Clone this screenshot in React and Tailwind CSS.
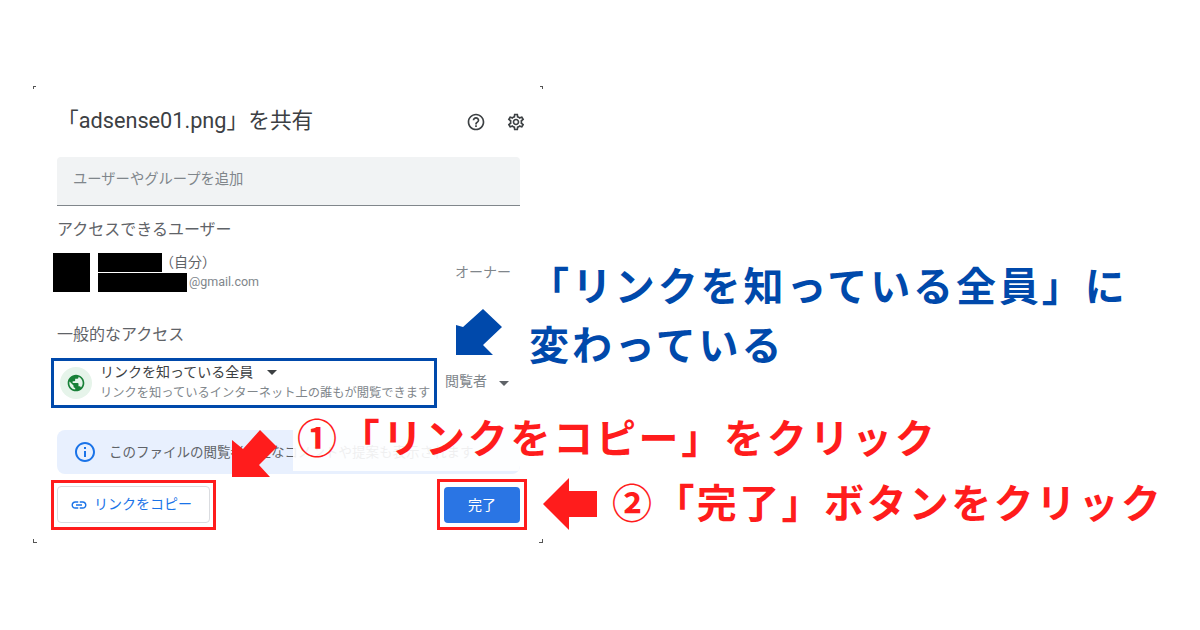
import React from 'react';

const icons = {
  help: 'M11 18h2v-2h-2v2zm1-16C6.48 2 2 6.48 2 12s4.48 10 10 10 10-4.48 10-10S17.52 2 12 2zm0 18c-4.41 0-8-3.59-8-8s3.59-8 8-8 8 3.59 8 8-3.59 8-8 8zm0-14c-2.21 0-4 1.79-4 4h2c0-1.1.9-2 2-2s2 .9 2 2c0 2-3 1.75-3 5h2c0-2.25 3-2.5 3-5 0-2.21-1.79-4-4-4z',
  gear: 'M19.43 12.98c.04-.32.07-.64.07-.98 0-.34-.03-.66-.07-.98l2.11-1.65c.19-.15.24-.42.12-.64l-2-3.46c-.09-.16-.26-.25-.44-.25-.06 0-.12.01-.17.03l-2.49 1c-.52-.4-1.08-.73-1.69-.98l-.38-2.65C14.46 2.18 14.25 2 14 2h-4c-.25 0-.46.18-.49.42l-.38 2.65c-.61.25-1.17.59-1.69.98l-2.49-1c-.06-.02-.12-.03-.18-.03-.17 0-.34.09-.43.25l-2 3.46c-.13.22-.07.49.12.64l2.11 1.65c-.04.32-.07.65-.07.98 0 .33.03.66.07.98l-2.11 1.65c-.19.15-.24.42-.12.64l2 3.46c.09.16.26.25.44.25.06 0 .12-.01.17-.03l2.49-1c.52.4 1.08.73 1.69.98l.38 2.65c.03.24.24.42.49.42h4c.25 0 .46-.18.49-.42l.38-2.65c.61-.25 1.17-.59 1.69-.98l2.49 1c.06.02.12.03.18.03.17 0 .34-.09.43-.25l2-3.46c.12-.22.07-.49-.12-.64l-2.11-1.65zm-1.98-1.71c.04.31.05.52.05.73 0 .21-.02.43-.05.73l-.14 1.13.89.7 1.08.84-.7 1.21-1.27-.51-1.04-.42-.9.68c-.43.32-.84.56-1.25.73l-1.06.43-.16 1.13-.2 1.35h-1.4l-.19-1.35-.16-1.13-1.06-.43c-.43-.18-.83-.41-1.23-.71l-.91-.7-1.06.43-1.27.51-.7-1.21 1.08-.84.89-.7-.14-1.13c-.03-.31-.05-.54-.05-.74s.02-.43.05-.73l.14-1.13-.89-.7-1.08-.84.7-1.21 1.27.51 1.04.42.9-.68c.43-.32.84-.56 1.25-.73l1.06-.43.16-1.13.2-1.35h1.39l.19 1.35.16 1.13 1.06.43c.43.18.83.41 1.23.71l.91.7 1.06-.43 1.27-.51.7 1.21-1.07.85-.89.7.14 1.13zM12 8c-2.21 0-4 1.79-4 4s1.79 4 4 4 4-1.79 4-4-1.79-4-4-4zm0 6c-1.1 0-2-.9-2-2s.9-2 2-2 2 .9 2 2-.9 2-2 2z',
  link: 'M3.9 12c0-1.71 1.39-3.1 3.1-3.1h4V7H7c-2.76 0-5 2.24-5 5s2.24 5 5 5h4v-1.9H7c-1.71 0-3.1-1.39-3.1-3.1zM8 13h8v-2H8v2zm9-6h-4v1.9h4c1.71 0 3.1 1.39 3.1 3.1s-1.39 3.1-3.1 3.1h-4V17h4c2.76 0 5-2.24 5-5s-2.24-5-5-5z',
  globe: 'M12 2C6.48 2 2 6.48 2 12s4.48 10 10 10 10-4.48 10-10S17.52 2 12 2zm-1 17.93c-3.95-.49-7-3.85-7-7.93 0-.62.08-1.21.21-1.79L9 15v1c0 1.1.9 2 2 2v1.93zm6.9-2.54c-.26-.81-1-1.39-1.9-1.39h-1v-3c0-.55-.45-1-1-1H8v-2h2c.55 0 1-.45 1-1V7h2c1.1 0 2-.9 2-2v-.41c2.93 1.19 5 4.06 5 7.41 0 2.08-.8 3.97-2.1 5.39z',
  info: 'M11 7h2v2h-2zm0 4h2v6h-2zm1-9C6.48 2 2 6.48 2 12s4.48 10 10 10 10-4.48 10-10S17.52 2 12 2zm0 18c-4.41 0-8-3.59-8-8s3.59-8 8-8 8 3.59 8 8-3.59 8-8 8z',
};

const Icon = ({ name, className }) => (
  <svg viewBox="0 0 24 24" fill="currentColor" className={className}>
    <path d={icons[name]} />
  </svg>
);

const Caret = ({ className = '' }) => (
  <span className={`w-0 h-0 border-x-[5px] border-x-transparent border-t-[5px] ${className}`} />
);

// the little dark marks left at the corners of the cropped dialog
const CornerMarks = () => (
  <>
    <span className="absolute left-0 top-0 w-[3px] h-[3px] border-l border-t border-[#555]" />
    <span className="absolute right-0 top-0 w-[3px] h-[3px] border-r border-t border-[#555]" />
    <span className="absolute left-0 bottom-0 w-[4px] h-[4px] border-l border-b border-[#555]" />
    <span className="absolute right-0 bottom-0 w-[4px] h-[4px] border-r border-b border-[#555]" />
  </>
);

const Dialog = () => (
  <div className="relative w-[510px] h-[457px] pl-[24px] pr-[23px] bg-white font-['Roboto','Noto_Sans_CJK_JP',sans-serif]">
    <CornerMarks />

    <div className="flex items-center justify-between h-[71px] -mr-[6px]">
      <h1 className="text-[21.7px] font-normal text-[#3c4043]">「adsense01.png」を共有</h1>
      <div className="flex items-center gap-[20px] text-[#3c4043]">
        <Icon name="help" className="w-[20px] h-[20px]" />
        <Icon name="gear" className="w-[20px] h-[20px]" />
      </div>
    </div>

    <div className="flex items-center h-[49px] px-[16px] pb-[3px] bg-[#f1f3f4] rounded-t border-b border-[#80868b] text-[14.3px] text-[#80868b]">
      ユーザーやグループを追加
    </div>

    <div className="flex items-center h-[47px] text-[16px] text-[#5f6368]">アクセスできるユーザー</div>

    <div className="flex items-center -ml-[4px]">
      <div className="w-[37px] h-[39px] bg-black" />
      <div className="ml-[8px] flex flex-col gap-px">
        <div className="flex items-center h-[19px] text-[14px] text-[#5f6368]">
          <span className="w-[64px] h-[19px] -mr-[2px] bg-black" />
          （自分）
        </div>
        <div className="flex items-center h-[19px] text-[12.5px] text-[#80868b]">
          <span className="w-[89px] h-[19px] mr-[2px] bg-black" />
          @gmail.com
        </div>
      </div>
      <span className="ml-auto mr-[9px] text-[14px] text-[#80868b]">オーナー</span>
    </div>

    <div className="pt-[33px] pb-[13px] text-[16px] leading-[20px] text-[#5f6368]">一般的なアクセス</div>

    <div className="flex items-center -ml-[6px]">
      <div className="flex items-center w-[386px] h-[50px] border-[3px] border-[#0049ab] pl-[6px]">
        <div className="flex items-center justify-center w-[32px] h-[32px] rounded-full bg-[#e6f4ea]">
          <Icon name="globe" className="w-[20px] h-[20px] text-[#188038]" />
        </div>
        <div className="ml-[8px] flex flex-col">
          <div className="flex items-center h-[21px] text-[14px] text-[#3c4043]">
            リンクを知っている全員
            <Caret className="ml-[14px] border-t-[#3c4043]" />
          </div>
          <div className="h-[21px] text-[12.25px] leading-[21px] whitespace-nowrap text-[#80868b]">
            リンクを知っているインターネット上の誰もが閲覧できます
          </div>
        </div>
      </div>
      <span className="ml-[8px] pb-[4px] text-[14px] text-[#80868b]">閲覧者</span>
      <Caret className="ml-[12px] border-t-[#5f6368]" />
    </div>

    <div className="relative flex items-center h-[44px] mt-[22px] pl-[16px] rounded-lg bg-[#e8f0fe] overflow-hidden">
      <Icon name="info" className="w-[24px] h-[24px] text-[#1a73e8]" />
      <span className="ml-[12px] text-[13.5px] whitespace-nowrap text-[#5f6368]">
        このファイルの閲覧者に主なコメントや提案も表示されます
      </span>
      <div className="absolute left-[236px] right-0 top-0 h-[41px] bg-white/90" />
    </div>

    <div className="flex items-start justify-between mt-[5px] -ml-[6px] -mr-[7px]">
      <div className="mt-px border-[3px] border-[#ff1c1c] px-[3px] pt-[3px] pb-[4px]">
        <button className="flex items-center w-[153px] h-[37px] pl-[12px] gap-[6px] bg-white border border-[#dadce0] rounded text-[14px] text-[#1a73e8]">
          <Icon name="link" className="w-[18px] h-[18px]" />
          リンクをコピー
        </button>
      </div>
      <div className="border-[3px] border-[#ff1c1c] px-[4px] pt-[5px] pb-[4px]">
        <button className="w-[76px] h-[36px] rounded bg-[#2a75e4] text-[14px] text-white">完了</button>
      </div>
    </div>
  </div>
);

// annotations pasted on top of the screenshot
const Annotations = () => (
  <div className="font-['Noto_Sans_CJK_JP',sans-serif] font-bold text-[40px] leading-[60px] whitespace-nowrap">
    <svg className="absolute left-0 top-0 w-[1200px] h-[630px] pointer-events-none" viewBox="0 0 1200 630">
      <polygon fill="#0049ab" points="456,355 456,325 463,327 483,309 502,327 483,345 493,355" />
      <polygon fill="#ff1c1c" points="232,477 232,440 243,449 260,430 277,447 259,465 270,477" />
      <polygon fill="#ff1c1c" points="543,504 569,478 569,491 597,491 597,517 569,517 569,530" />
    </svg>
    <div className="absolute left-[529px] top-[254px] tracking-[2.9px] text-[#0049ab]">「リンクを知っている全員」に</div>
    <div className="absolute left-[529px] top-[313px] tracking-[2.9px] text-[#0049ab]">変わっている</div>
    <div className="absolute left-[297px] top-[406px] tracking-[2.7px] text-[#ff1c1c]">①「リンクをコピー」をクリック</div>
    <div className="absolute left-[612px] top-[471px] tracking-[2.4px] text-[#ff1c1c]">②「完了」ボタンをクリック</div>
  </div>
);

export default function App() {
  return (
    <div className="relative w-[1200px] h-[630px] pt-[86px] pl-[33px] bg-white overflow-hidden">
      <Dialog />
      <Annotations />
    </div>
  );
}
